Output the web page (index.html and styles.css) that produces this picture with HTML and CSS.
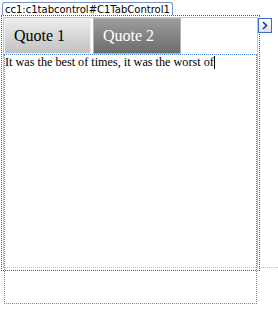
FILE: index.html
```html
<!DOCTYPE html>
<html>
<head>
  <title>C1TabControl</title>
  <link rel="stylesheet" href="styles.css">
</head>
<body>
  <div class="designer">
    <div class="tag">cc1:c1tabcontrol#C1TabControl1</div>
    <div class="frame">
      <div class="tabctl">
        <div class="tabs">
          <div class="tab tab-light">Quote 1</div>
          <div class="tab tab-dark">Quote 2</div>
        </div>
        <div class="page">
          <span class="quote">It was the best of times, it was the worst of</span><span class="caret"></span>
        </div>
      </div>
      <div class="guide"></div>
      <div class="smart-tag">
        <svg width="8" height="9" viewBox="0 0 8 9">
          <polyline points="2,1 5.5,4.5 2,8" fill="none" stroke="#1d3f86" stroke-width="1.6"/>
        </svg>
      </div>
    </div>
  </div>
</body>
</html>
```
FILE: styles.css
```css
body {
  margin: 0;
  padding: 0;
  background-color: #fff;
}

.designer {
  box-sizing: border-box;
  min-height: 310px;
  padding: 2px 0 0 1px;
}

.tag {
  width: max-content;
  margin-left: 1px;
  height: 12px;
  padding: 0 2px;
  border: 1px solid #7a93c4;
  border-bottom: none;
  border-radius: 3px 3px 0 0;
  background-color: #fff;
  font-family: "DejaVu Sans", sans-serif;
  font-size: 10px;
  line-height: 13px;
  color: #000;
}

.frame {
  position: relative;
  width: 257px;
  height: 254px;
  border: 1px dotted #2f5fb5;
}

.tabctl {
  margin: 1px 0 0 1px;
  width: 253px;
  height: 250px;
  border: 1px solid #c4c4c4;
  border-bottom: none;
}

.tabs {
  display: flex;
  gap: 2px;
  height: 36px;
}

.tab {
  box-sizing: border-box;
  height: 36px;
  padding-left: 9px;
  font-family: "Liberation Serif", serif;
  font-size: 16px;
  line-height: 34px;
}

.tab-light {
  width: 87px;
  border: 1px solid #f2f2f2;
  background: linear-gradient(to bottom, #ececec, #c2c2c2);
  color: #000;
}

.tab-dark {
  width: 88px;
  border: 1px solid #b4b4b4;
  background: linear-gradient(to bottom, #9c9c9c, #6c6c6c);
  color: #fff;
}

.page {
  box-sizing: border-box;
  width: 253px;
  height: 250px;
  border: 1px dotted #4a8ee0;
  font-family: "Liberation Serif", serif;
  font-size: 12.2px;
  line-height: 14px;
  color: #000;
}

.caret {
  display: inline-block;
  width: 1px;
  height: 13px;
  background-color: #000;
  vertical-align: -3px;
}

.guide {
  position: absolute;
  top: 251px;
  left: 3px;
  width: 273px;
  border-top: 1px dotted #c0c0c0;
}

.smart-tag {
  position: absolute;
  top: 2px;
  left: 256px;
  box-sizing: border-box;
  width: 14px;
  height: 15px;
  border: 1px solid #3a6ec8;
  background: linear-gradient(to bottom, #ffffff, #dde3ee);
  display: flex;
  align-items: center;
  justify-content: center;
}
```
